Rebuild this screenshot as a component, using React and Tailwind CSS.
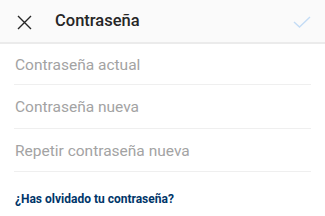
import React from "react";

export default function App() {
  const rows = ["Contraseña actual", "Contraseña nueva", "Repetir contraseña nueva"];
  const heights = ["h-[41px]", "h-[44px]", "h-[43px]"];
  return (
    <div className="w-[325px] h-[216px] bg-white overflow-hidden" style={{ fontFamily: "Roboto, 'Noto Sans', sans-serif" }}>
      <div className="h-[42px] bg-[#fafafa] border-b-2 border-[#ebebeb] flex items-center box-content">
        <div className="w-[55px] flex items-center justify-center pr-[6px] pt-[2px]">
          <svg width="15" height="15" viewBox="0 0 15 15">
            <path d="M1 1 L14 14 M14 1 L1 14" stroke="#262626" strokeWidth="1.4" fill="none" />
          </svg>
        </div>
        <div className="flex-1 text-[16.5px] font-medium text-[#262626] pt-[1px]">Contraseña</div>
        <div className="w-[40px] flex items-center justify-center pr-[6px] pt-[1px]">
          <svg width="18" height="12" viewBox="0 0 18 12">
            <path d="M1 6 L6.5 11 L17 1" stroke="#c4dcf5" strokeWidth="1.4" fill="none" />
          </svg>
        </div>
      </div>
      <div className="px-[14px]">
        {rows.map((r, i) => (
          <div key={i} className={`flex items-center border-b border-[#efefef] pl-[1px] pt-[3px] text-[15.5px] text-[#a3a3a3] ${heights[i]}`}>
            {r}
          </div>
        ))}
        <div className="pt-[18px] pl-[1px] text-[12px] font-bold text-[#003569]">¿Has olvidado tu contraseña?</div>
      </div>
    </div>
  );
}
